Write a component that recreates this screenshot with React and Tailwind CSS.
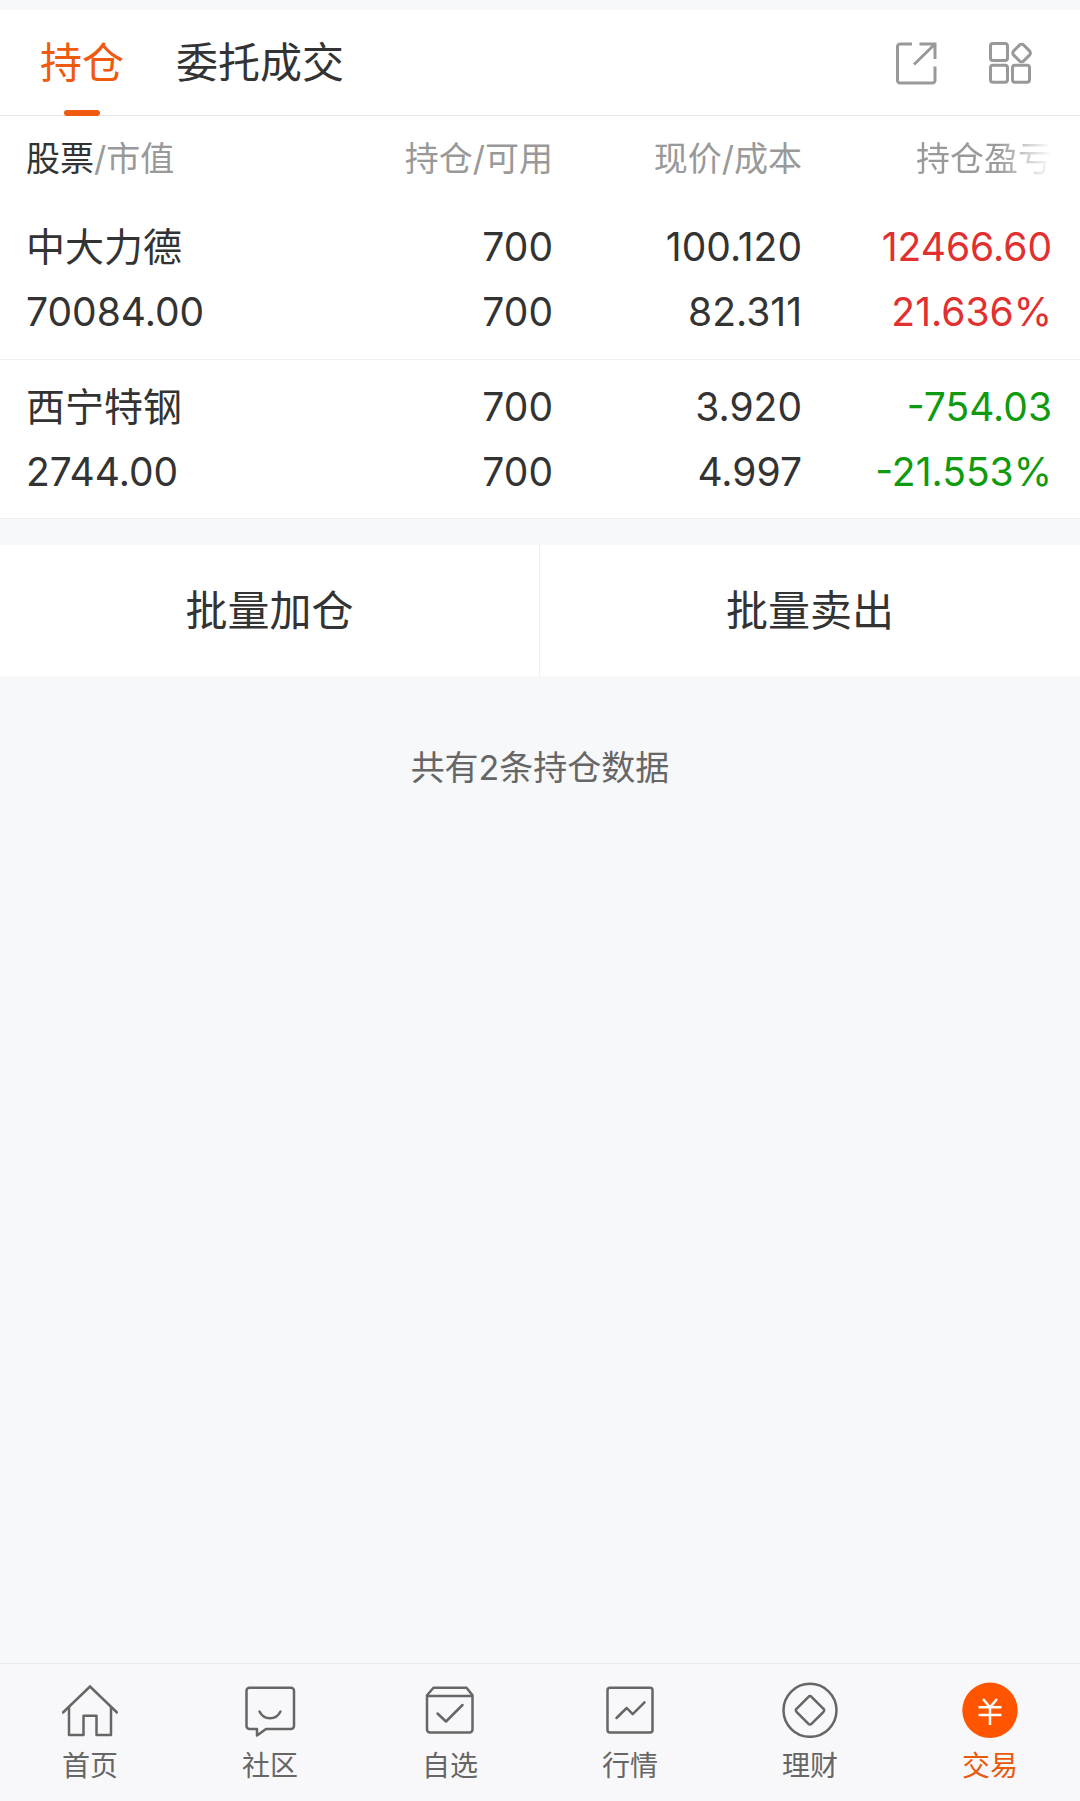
import { useState } from "react";
import clsx from "clsx";

const holdings = [
  {
    name: "中大力德",
    marketValue: "70084.00",
    position: "700",
    available: "700",
    price: "100.120",
    cost: "82.311",
    profit: "12466.60",
    profitRate: "21.636%",
    isGain: true,
  },
  {
    name: "西宁特钢",
    marketValue: "2744.00",
    position: "700",
    available: "700",
    price: "3.920",
    cost: "4.997",
    profit: "-754.03",
    profitRate: "-21.553%",
    isGain: false,
  },
];

const ShareIcon = () => (
  <svg viewBox="0 0 44 44" className="size-11" fill="none" stroke="currentColor" strokeWidth="3" strokeLinejoin="round">
    <path d="M18 3H6a2.5 2.5 0 0 0-2.5 2.5v34A2.5 2.5 0 0 0 6 42h32.500a2.500 2.500 0 0 0 2.500-2.500V25.500" />
    <path d="M25.500 3H41v15M41 3 20 23.500" strokeLinejoin="miter" />
  </svg>
);

const GridIcon = () => (
  <svg viewBox="0 0 46 44" className="h-11 w-[46px]" fill="none" stroke="currentColor" strokeWidth="3">
    <rect x="2.500" y="2.500" width="17" height="17" rx="2.500" />
    <rect x="2.500" y="24.200" width="17" height="17" rx="2.500" />
    <rect x="24.500" y="24.200" width="17" height="17" rx="2.500" />
    <rect x="26.500" y="4.900" width="14.200" height="14.200" rx="3" transform="rotate(45 33.600 12)" />
  </svg>
);

const NavIcon = ({ children }) => (
  <svg
    viewBox="0 0 56 56"
    className="size-14"
    fill="none"
    stroke="currentColor"
    strokeWidth="2.5"
    strokeLinecap="round"
    strokeLinejoin="round"
  >
    {children}
  </svg>
);

const navItems = [
  {
    label: "首页",
    icon: (
      <NavIcon>
        <path d="M1 30.500 28 4.500l27 26" strokeLinejoin="miter" />
        <path d="M7 25.500V53h14.500V33.700h13V53H49V25.500" />
      </NavIcon>
    ),
  },
  {
    label: "社区",
    icon: (
      <NavIcon>
        <path d="M7 5.800h42a3 3 0 0 1 3 3V44a3 3 0 0 1-3 3H24l-9 6.500V47H7.500a3 3 0 0 1-3-3V8.800a3 3 0 0 1 3-3z" />
        <path d="M17.500 29.500c4.500 9 16.500 9 21 0" />
      </NavIcon>
    ),
  },
  {
    label: "自选",
    icon: (
      <NavIcon>
        <path d="M11.500 5.800h33l6 7.500v34.200a3 3 0 0 1-3 3H8a3 3 0 0 1-3-3V13.300z" />
        <path d="M5.500 14h44.500M15.500 31.500l8.500 8 16.500-16.500" />
      </NavIcon>
    ),
  },
  {
    label: "行情",
    icon: (
      <NavIcon>
        <rect x="5.500" y="5.800" width="45" height="44.700" rx="2.500" />
        <path d="M14.500 36 24.700 26l6 6.200L42.500 20.300" />
      </NavIcon>
    ),
  },
  {
    label: "理财",
    icon: (
      <NavIcon>
        <circle cx="28" cy="28.300" r="26.500" />
        <path d="m26.500 14.800-12 12a2 2 0 0 0 0 3l12 12a2 2 0 0 0 3 0l12-12a2 2 0 0 0 0-3l-12-12a2 2 0 0 0-3 0z" />
      </NavIcon>
    ),
  },
  {
    label: "交易",
    active: true,
    icon: (
      <NavIcon>
        <circle cx="28" cy="28.300" r="27.700" fill="#ff5500" stroke="none" />
        <path
          d="M21 17l7 8.200 7-8.200M16.500 25.200h23M16.500 33h23M28 25.200V43"
          stroke="#fff"
          strokeLinecap="butt"
        />
      </NavIcon>
    ),
  },
];

const Tabs = () => {
  const [active, setActive] = useState("持仓");

  return (
    <div role="tablist" className="flex h-full gap-[52px]">
      {["持仓", "委托成交"].map((tab) => (
        <button
          key={tab}
          role="tab"
          aria-selected={active === tab}
          onClick={() => setActive(tab)}
          className={clsx("relative h-full text-[42px]", active === tab ? "text-[#f05a10]" : "text-[#333333]")}
        >
          {tab}
          {active === tab && (
            <span className="absolute -bottom-px left-1/2 h-1.5 w-9 -translate-x-1/2 rounded-sm bg-[#f05a10]" />
          )}
        </button>
      ))}
    </div>
  );
};

const HoldingsTable = () => (
  <table className="w-full table-fixed border-collapse bg-white">
    <colgroup>
      <col />
      <col className="w-[249px]" />
      <col className="w-[249px]" />
      <col className="w-[278px]" />
    </colgroup>
    <thead>
      <tr className="h-[84px] text-right text-[34px] text-[#999999]">
        <th className="pl-[26px] text-left font-normal">
          <span className="text-[#333333]">股票</span>/市值
        </th>
        <th className="font-normal">持仓/可用</th>
        <th className="font-normal">现价/成本</th>
        <th className="pr-7 font-normal">
          <span className="bg-linear-to-r from-[#999999] from-60% to-[#ffffff] bg-clip-text text-transparent">
            持仓盈亏
          </span>
        </th>
      </tr>
    </thead>
    <tbody>
      {holdings.map((item) => (
        <tr
          key={item.name}
          className="h-[159px] border-b border-[#eeeeee] text-right text-[39px] leading-[65px] text-[#333333]"
        >
          <td className="pl-[26px] text-left">
            <div>{item.name}</div>
            <div>{item.marketValue}</div>
          </td>
          <td>
            <div>{item.position}</div>
            <div>{item.available}</div>
          </td>
          <td>
            <div>{item.price}</div>
            <div>{item.cost}</div>
          </td>
          <td className={clsx("pr-7", item.isGain ? "text-[#e03030]" : "text-[#109a10]")}>
            <div>{item.profit}</div>
            <div>{item.profitRate}</div>
          </td>
        </tr>
      ))}
    </tbody>
  </table>
);

const BottomNav = () => (
  <nav className="sticky bottom-0 grid h-[138px] grid-cols-6 border-t border-[#e8eaea] bg-[#f8f8fa]">
    {navItems.map((item) => (
      <a
        key={item.label}
        href="#"
        className={clsx(
          "flex flex-col items-center gap-2.5 pt-[18px] text-[28px] leading-9",
          item.active ? "text-[#e8590c]" : "text-[#666666]"
        )}
      >
        {item.icon}
        <span>{item.label}</span>
      </a>
    ))}
  </nav>
);

const App = () => {
  return (
    <div className="flex min-h-screen flex-col bg-[#f7f8fa] font-['Inter','Noto_Sans_CJK_SC',sans-serif]">
      <main className="flex-1 pt-2.5">
        <header className="flex h-[106px] items-center justify-between border-b border-[#e8e8e8] bg-white pr-[46px] pl-10">
          <Tabs />
          <div className="flex items-center gap-[50px] text-[#999999]">
            <button aria-label="分享">
              <ShareIcon />
            </button>
            <button aria-label="更多功能">
              <GridIcon />
            </button>
          </div>
        </header>

        <HoldingsTable />

        <div className="mt-[26px] grid grid-cols-2 bg-white text-[42px] text-[#333333]">
          <button className="h-[131px] border-r border-[#eeeeee]">批量加仓</button>
          <button className="h-[131px]">批量卖出</button>
        </div>

        <p className="mt-[66px] text-center text-[34px] leading-[52px] text-[#666666]">共有2条持仓数据</p>
      </main>

      <BottomNav />
    </div>
  );
};

export default App;
